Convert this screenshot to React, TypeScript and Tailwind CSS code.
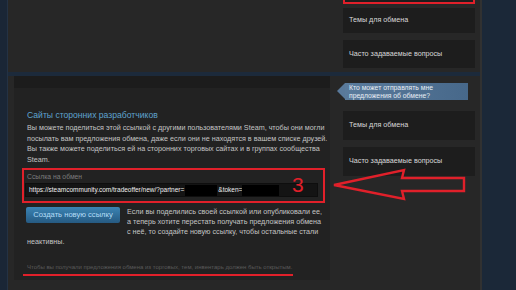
import React from 'react';

function SideItem({ label, className = '' }: { label: string; className?: string }) {
  return (
    <div className={`bg-[#1d1d1d] flex items-center pl-[6px] text-[7.2px] text-[#d8d8d8] whitespace-nowrap ${className}`}>
      {label}
    </div>
  );
}

export default function App() {
  return (
    <div className="relative w-[516px] h-[290px] overflow-hidden bg-[#1b2838] flex font-['Liberation_Sans',Arial,sans-serif]">
      <div className="w-[8px] bg-[#1a2636] border-r border-[#243244]" />

      <div className="w-[474px] flex flex-col border-r-2 border-[#313131]">
        {/* top panel */}
        <div className="h-[72px] bg-[#272727] flex justify-end pr-[5px]">
          <div className="w-[132px] flex flex-col">
            <div className="h-[4px] border-2 border-t-0 border-[#e0202a] bg-[#1d1d1d]" />
            <SideItem label="Темы для обмена" className="mt-[4px] h-[25px]" />
            <SideItem label="Часто задаваемые вопросы" className="mt-[7px] h-[28px]" />
          </div>
        </div>

        <div className="h-[4px] bg-[#1c2a3b]" />

        {/* bottom panel */}
        <div className="flex-1 bg-[#272727] flex pl-[6px]">
          <div className="w-[316px] mb-[10px] bg-[#222222] flex flex-col">
            <div className="h-[12px] bg-[#1c1c1c]" />
            <div className="pl-[13px] pr-[8px] pt-[21px]">
              <div className="text-[8.6px] leading-[12px] text-[#5fa3cf] whitespace-nowrap">Сайты сторонних разработчиков</div>
              <p className="mt-[2px] text-[7.2px] leading-[10.5px] text-[#c4c4c4] whitespace-nowrap">
                Вы можете поделиться этой ссылкой с другими пользователями Steam, чтобы они могли
                <br />
                посылать вам предложения обмена, даже если они не находятся в вашем списке друзей.
                <br />
                Вы также можете поделиться ей на сторонних торговых сайтах и в группах сообщества
                <br />
                Steam.
              </p>

              <div className="mt-[3px] -ml-[5px] w-[303px] border-2 border-[#e0202a] pt-[2px] pb-[4px]">
                <div className="pl-[3px] text-[6.8px] leading-[9px] text-[#7c7c7c]">Ссылка на обмен</div>
                <div className="mt-[2px] ml-[1px] w-[293px] h-[14px] bg-[#141414] border border-[#0e0e0e] flex items-center pl-[3px] text-[6.5px] text-[#f0f0f0] whitespace-nowrap">
                  <span>https://steamcommunity.com/tradeoffer/new/?partner=</span>
                  <span className="inline-block w-[32px] h-[11px] bg-black ml-[1px]" />
                  <span className="ml-[1px]">&amp;token=</span>
                  <span className="inline-block w-[37px] h-[11px] bg-black" />
                </div>
              </div>

              <div className="mt-[4px] text-[7.2px] leading-[10px] text-[#c4c4c4] whitespace-nowrap">
                <button className="float-left -ml-[1px] mr-[7px] mb-[8px] w-[94px] h-[16px] rounded-[2px] bg-linear-to-b from-[#3b84b4] to-[#265a82] text-[7.6px] text-[#b3ddf7]">
                  Создать новую ссылку
                </button>
                Если вы поделились своей ссылкой или опубликовали ее,
                <br />
                а теперь хотите перестать получать предложения обмена
                <br />
                с неё, то создайте новую ссылку, чтобы остальные стали
                <br />
                неактивны.
              </div>

              <div className="mt-[16px] text-[6px] leading-[8px] text-[#5a5a5a] whitespace-nowrap">
                Чтобы вы получали предложения обмена из торговых, тем, инвентарь должен быть открытым.
              </div>
              <div className="mt-[3px] -ml-[4px] w-[270px] h-[2px] bg-[#e0202a]" />
            </div>
          </div>

          <div className="ml-[13px] w-[132px] pt-[7px] flex flex-col">
            <div className="-ml-[6px] w-[131px] h-[17px] flex">
              <div className="w-0 h-0 border-y-[8.5px] border-y-transparent border-r-[8px] border-r-[#59799a]" />
              <div className="flex-1 bg-linear-to-r from-[#5a7b9c] to-[#47688a] flex flex-col justify-center pl-[4px] text-[6.8px] leading-[8px] text-[#e8eef4] whitespace-nowrap">
                <span>Кто может отправлять мне</span>
                <span>предложения об обмене?</span>
              </div>
            </div>
            <SideItem label="Темы для обмена" className="mt-[11px] h-[29px]" />
            <SideItem label="Часто задаваемые вопросы" className="mt-[7px] h-[29px]" />
          </div>
        </div>
      </div>

      {/* annotations */}
      <div className="absolute left-[292px] top-[174px] text-[21px] leading-none text-[#e0202a]">3</div>
      <svg className="absolute left-0 top-0 pointer-events-none" width="516" height="290" viewBox="0 0 516 290">
        <path
          d="M334 185 L404 170 L402 178 L464 178 L464 191 L402 191 L404 199 Z"
          fill="none"
          stroke="#e0202a"
          strokeWidth="2.4"
          strokeLinejoin="miter"
        />
      </svg>
    </div>
  );
}
